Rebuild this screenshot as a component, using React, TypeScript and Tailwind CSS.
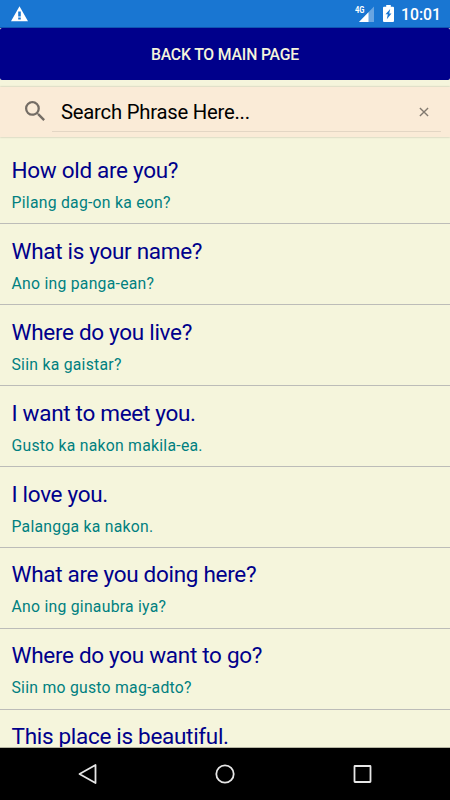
const phrases = [
  ['How old are you?', 'Pilang dag-on ka eon?'],
  ['What is your name?', 'Ano ing panga-ean?'],
  ['Where do you live?', 'Siin ka gaistar?'],
  ['I want to meet you.', 'Gusto ka nakon makila-ea.'],
  ['I love you.', 'Palangga ka nakon.'],
  ['What are you doing here?', 'Ano ing ginaubra iya?'],
  ['Where do you want to go?', 'Siin mo gusto mag-adto?'],
  ['This place is beautiful.', ''],
];

function StatusBar() {
  return (
    <header className="flex h-[27px] shrink-0 items-center bg-[#1976d2] pl-[11px] pr-[9px] text-white">
      <svg width="17" height="16" viewBox="0 0 17 16" fill="currentColor">
        <path fillRule="evenodd" d="M8.5 .3 17 15.2H0ZM7.2 5.500v5h2.600v-5Zm0 6v2h2.600v-2Z" />
      </svg>
      <svg className="ml-auto" width="20" height="18" viewBox="0 0 20 18" fill="currentColor">
        <path d="M19 1.5V17H4Z" opacity=".35" />
        <path d="M13.5 7.2V17H4Z" />
        <text x="0" y="8.2" fontSize="8.6" fontWeight="700" fontFamily="Roboto, sans-serif" textLength="9.5" lengthAdjust="spacingAndGlyphs">4G</text>
      </svg>
      <svg className="ml-[8px]" width="11" height="17" viewBox="0 0 11 17" fill="currentColor">
        <path fillRule="evenodd" d="M3.2 0h4.6v1.7H10q1 0 1 1V16q0 1-1 1H1q-1 0-1-1V2.700q0-1 1-1h2.200ZM7.200 4 2.500 9.300h2.300L3.800 14.200 8.500 8.600H6.200Z" />
      </svg>
      <span className="ml-[7px] pt-[2px] text-[15.750px] font-medium leading-[27px]">10:01</span>
    </header>
  );
}

function SearchBar() {
  return (
    <div className="mt-[7px] flex h-[50px] shrink-0 items-center bg-[#faebd7] pl-[25px] pr-[9px] shadow-[0_0_2px_rgba(0,0,0,0.25)]">
      <svg className="mb-[2px]" width="20" height="20" viewBox="3 3 17.500 17.500" fill="#746d65">
        <path d="M15.500 14h-.79l-.28-.27A6.471 6.471 0 0 0 16 9.500 6.500 6.500 0 1 0 9.500 16c1.610 0 3.090-.59 4.230-1.570l.27.28v.79l5 4.990L20.490 19l-4.990-5zm-6 0C7.010 14 5 11.990 5 9.500S7.010 5 9.500 5 14 7.010 14 9.500 11.990 14 9.500 14z" />
      </svg>
      <div className="mb-[5px] ml-[7px] flex h-[41px] flex-1 items-center self-end border-b border-[#e3d6c4] pl-[9px] pr-[12px] pt-[1px]">
        <span className="text-[20.250px] leading-6 tracking-[-0.22px] text-black">Search Phrase Here...</span>
        <svg className="ml-auto" width="10" height="10" viewBox="0 0 11 11" stroke="#81796f" strokeWidth="1.500">
          <path d="m1 1 9 9M10 1l-9 9" />
        </svg>
      </div>
    </div>
  );
}

export default function App() {
  return (
    <div className="flex h-[800px] w-[450px] flex-col overflow-hidden bg-[#f5f5dc] font-['Roboto',sans-serif]">
      <StatusBar />
      <div className="flex h-[53px] shrink-0 flex-col border-t border-[#1155b0]">
        <button className="h-[52px] w-full rounded-[2px] bg-[#00008b] pt-[1px] text-[15.750px] font-medium leading-[52px] tracking-[-0.16px] text-[#f5f5dc]">BACK TO MAIN PAGE</button>
      </div>
      <SearchBar />
      <ul className="mt-[6px] min-h-0 flex-1 overflow-hidden border-b border-[#b5b5a2] pt-[0.300px]">
        {phrases.map(([title, translation]) => (
          <li key={title} className="flex h-[80.900px] flex-col border-b border-[#bcbcb8] pl-[11.500px] pt-[12.700px]">
            <span className="text-[22.500px] leading-[28px] tracking-[-0.300px] text-[#00008b]">{title}</span>
            {translation && (
              <span className="mt-[9px] text-[15.750px] leading-[20px] tracking-[0.260px] text-[#008080]">{translation}</span>
            )}
          </li>
        ))}
      </ul>
      <nav className="flex h-[52px] shrink-0 items-center bg-black">
        <svg width="450" height="52" viewBox="0 0 450 52" fill="none" stroke="#e6e6e6" strokeWidth="1.800" strokeLinejoin="round">
          <path d="M95.500 17v18L79.500 26Z" />
          <circle cx="225" cy="26" r="8.700" />
          <rect x="354.500" y="18" width="16" height="16" rx=".5" />
        </svg>
      </nav>
    </div>
  );
}
